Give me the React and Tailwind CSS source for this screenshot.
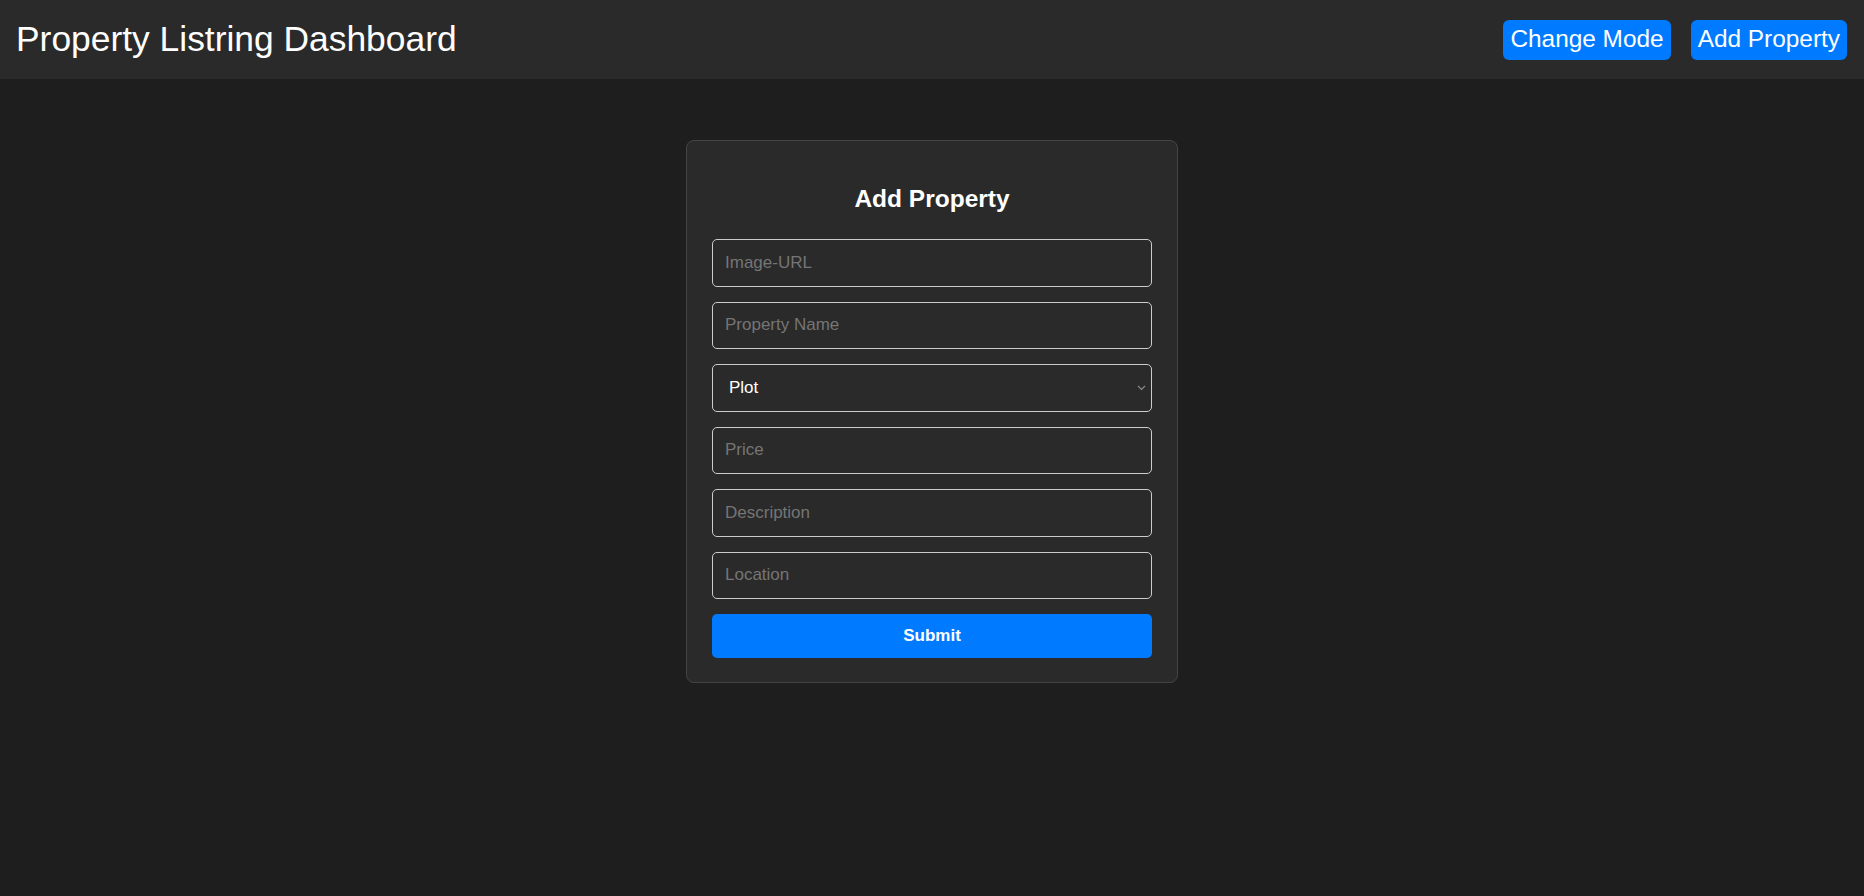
import React from "react";

function Field({ placeholder }) {
  return (
    <input
      type="text"
      placeholder={placeholder}
      className="h-[47.5px] w-full rounded-[5px] border border-[#cccccc] bg-[#2a2a2a] px-[12px] text-[17px] text-white placeholder:text-[#757575] outline-none"
      style={{ fontFamily: '"Liberation Sans", Arial, sans-serif' }}
    />
  );
}

export default function App() {
  const sans = { fontFamily: '"Liberation Sans", Arial, sans-serif' };
  return (
    <div className="min-h-[896px] w-full bg-[#1e1e1e]" style={sans}>
      <header className="flex h-[79px] items-center justify-between bg-[#2a2a2a] pl-[16px] pr-[17px]">
        <h1 className="text-[35.4px] font-normal leading-none text-white" style={sans}>
          Property Listring Dashboard
        </h1>
        <div className="flex items-center gap-[20px]">
          <button className="h-[40px] rounded-[6px] bg-[#007bff] px-[7px] text-[24.4px] leading-none text-white">
            Change Mode
          </button>
          <button className="h-[40px] rounded-[6px] bg-[#007bff] px-[7px] text-[24.4px] leading-none text-white">
            Add Property
          </button>
        </div>
      </header>

      <main className="flex justify-center pt-[61px]">
        <div className="w-[492px] rounded-[8px] border border-[#444444] bg-[#2a2a2a] px-[25px] pb-[24px] pt-[44px]">
          <h2 className="mb-[26px] text-center text-[24.5px] font-bold leading-[28px] text-white">
            Add Property
          </h2>
          <form className="flex flex-col gap-[15px]" onSubmit={(e) => e.preventDefault()}>
            <Field placeholder="Image-URL" />
            <Field placeholder="Property Name" />
            <div className="relative">
              <select
                defaultValue="Plot"
                className="h-[47.5px] w-full appearance-none rounded-[5px] border border-[#cccccc] bg-[#2a2a2a] pl-[16px] pr-[24px] text-[17px] text-white outline-none"
                style={sans}
              >
                <option>Plot</option>
                <option>House</option>
                <option>Apartment</option>
                <option>Commercial</option>
              </select>
              <svg
                className="pointer-events-none absolute right-[6px] top-[21px]"
                width="9"
                height="6"
                viewBox="0 0 9 6"
                fill="none"
              >
                <path d="M1 1l3.5 3.5L8 1" stroke="#8a8a8a" strokeWidth="1.2" />
              </svg>
            </div>
            <Field placeholder="Price" />
            <Field placeholder="Description" />
            <Field placeholder="Location" />
            <button
              type="submit"
              className="h-[44px] w-full rounded-[5px] bg-[#007bff] text-[17px] font-bold text-white"
            >
              Submit
            </button>
          </form>
        </div>
      </main>
    </div>
  );
}
